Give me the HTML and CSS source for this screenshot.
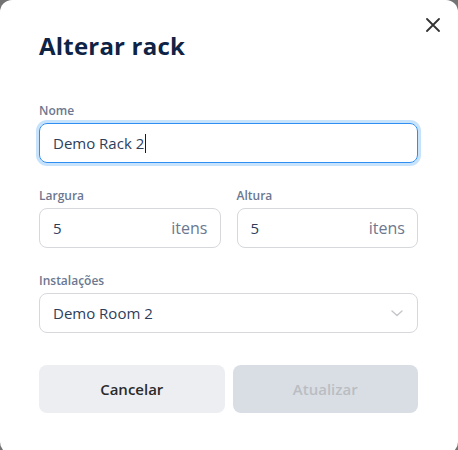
FILE: index.html
```html
<!DOCTYPE html>
<html lang="pt">
<head>
<meta charset="utf-8">
<title>Alterar rack</title>
<link rel="stylesheet" href="styles.css">
</head>
<body>
<div class="modal">
  <button class="close" aria-label="Fechar">
    <svg width="14" height="14" viewBox="0 0 14 14"><path d="M1 1L13 13M13 1L1 13" stroke="#333" stroke-width="1.8" stroke-linecap="round"/></svg>
  </button>
  <h1 class="title">Alterar rack</h1>

  <div class="field">
    <div class="label">Nome</div>
    <div class="input focused"><span class="value">Demo Rack 2</span><span class="caret"></span></div>
  </div>

  <div class="row">
    <div class="field">
      <div class="label">Largura</div>
      <div class="input"><span class="value">5</span><span class="suffix">itens</span></div>
    </div>
    <div class="field">
      <div class="label">Altura</div>
      <div class="input"><span class="value">5</span><span class="suffix">itens</span></div>
    </div>
  </div>

  <div class="field">
    <div class="label">Instalações</div>
    <div class="input"><span class="value">Demo Room 2</span>
      <svg class="chevron" width="12" height="7" viewBox="0 0 12 7"><path d="M1 1L6 5.5L11 1" fill="none" stroke="#c4c6ca" stroke-width="1.4" stroke-linecap="round" stroke-linejoin="round"/></svg>
    </div>
  </div>

  <div class="actions">
    <button class="btn cancel">Cancelar</button>
    <button class="btn submit" disabled>Atualizar</button>
  </div>
</div>
</body>
</html>
```

FILE: styles.css
```css
* { box-sizing: border-box; }
html, body { margin: 0; padding: 0; }
body {
  background: #737373;
  width: 458px;
  height: 450px;
  overflow: hidden;
  font-family: "Open Sans", "Liberation Sans", sans-serif;
}
.modal {
  position: relative;
  background: #fff;
  width: 458px;
  height: 454px;
  border-radius: 12px;
  padding: 30px 40px 0 39px;
}
.close {
  position: absolute;
  top: 17px;
  right: 17px;
  width: 16px;
  height: 16px;
  padding: 0;
  border: 0;
  background: none;
  display: flex;
  align-items: center;
  justify-content: center;
}
.title {
  margin: 0 0 41px;
  font-size: 24px;
  line-height: 32px;
  font-weight: 700;
  color: #0e2345;
  letter-spacing: 0.2px;
}
.field { display: flex; flex-direction: column; }
.label {
  font-size: 12px;
  line-height: 16px;
  font-weight: 600;
  color: #6b7890;
  margin-bottom: 4px;
}
.input {
  height: 40px;
  border: 1px solid #d6d8dc;
  border-radius: 8px;
  display: flex;
  align-items: center;
  padding: 0 12px 0 13px;
  font-size: 15px;
  color: #2d3e5b;
}
.input.focused {
  border-color: #2f8ef2;
  box-shadow: 0 0 0 3px #c7e3fc;
}
.caret {
  width: 1px;
  height: 19px;
  background: #1a1a1a;
  margin-left: 1px;
}
.suffix {
  margin-left: auto;
  font-size: 16px;
  color: #6b7890;
}
.chevron { margin-left: auto; margin-right: 2px; }
.row {
  display: grid;
  grid-template-columns: 1fr 1fr;
  gap: 16px;
  margin: 25px 0;
}
.actions {
  display: grid;
  grid-template-columns: 1fr 1fr;
  gap: 8px;
  margin-top: 32px;
}
.btn {
  height: 48px;
  border: 0;
  border-radius: 8px;
  font-family: inherit;
  font-size: 15px;
  font-weight: 600;
}
.cancel { background: #edeef1; color: #2a2a2a; }
.submit { background: #d9dee4; color: #b9bdc2; }
```
